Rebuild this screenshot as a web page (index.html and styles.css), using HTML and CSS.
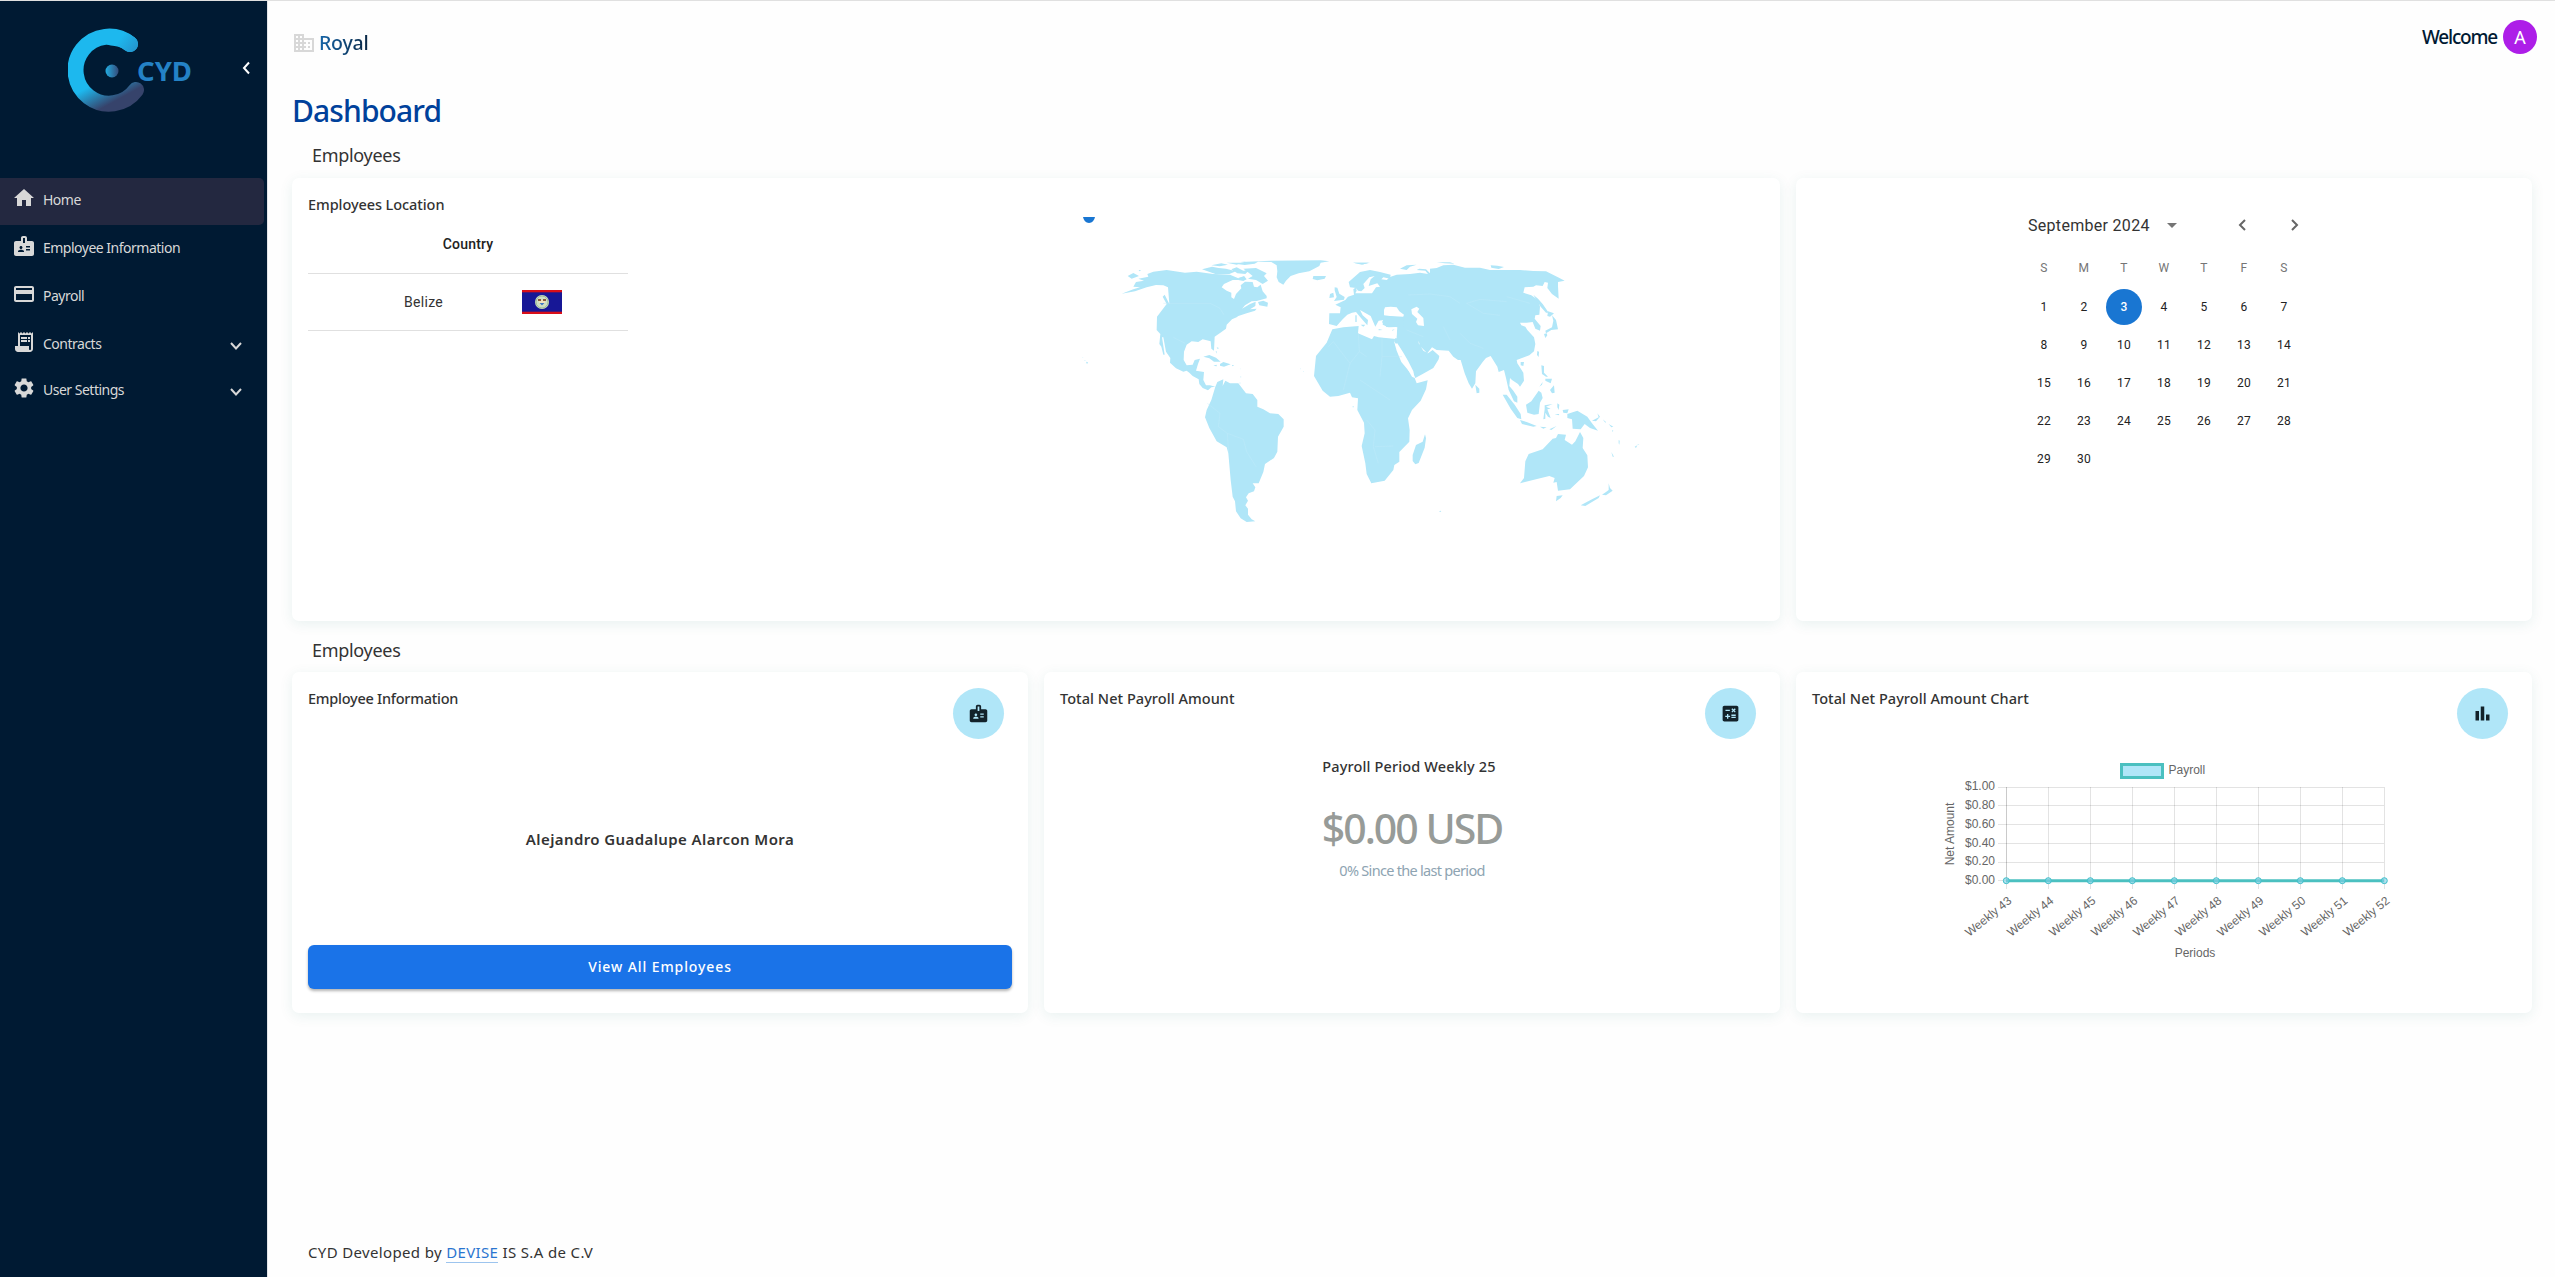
FILE: index.html
```html
<!DOCTYPE html>
<html lang="en">
<head>
<meta charset="utf-8">
<title>CYD Dashboard</title>
<link rel="stylesheet" href="styles.css">
</head>
<body>
<svg class="defs" width="0" height="0">
  <symbol id="badge" viewBox="0 0 24 24"><path fill-rule="evenodd" d="M20 7h-5V4c0-1.100-.9-2-2-2h-2c-1.100 0-2 .9-2 2v3H4c-1.100 0-2 .9-2 2v11c0 1.100.9 2 2 2h16c1.100 0 2-.9 2-2V9c0-1.100-.9-2-2-2zM9 12c.83 0 1.500.67 1.500 1.500S9.830 15 9 15s-1.500-.67-1.500-1.500S8.170 12 9 12zm3 6H6v-.75c0-1 2-1.500 3-1.500s3 .5 3 1.500V18zm1-9h-2V4h2v5zm5 7.500h-4V15h4v1.500zm0-3h-4V12h4v1.500z"/></symbol>
  <symbol id="down" viewBox="0 0 14 14"><path d="M2 4l5 5.500L12 4" fill="none" stroke="currentColor" stroke-width="2"/></symbol>
</svg>
<div class="app">
  <aside class="sidebar">
    <div class="brand">
      <svg class="logo" width="130" height="90" viewBox="0 0 130 90">
        <defs>
          <linearGradient id="ring" gradientUnits="userSpaceOnUse" x1="34" y1="28" x2="58" y2="72"><stop offset=".45" stop-color="#1db8ee"/><stop offset=".95" stop-color="#36436b"/></linearGradient>
          <linearGradient id="dot"><stop offset="0" stop-color="#22aee3"/><stop offset="1" stop-color="#354a78"/></linearGradient>
          <linearGradient id="tip" gradientUnits="userSpaceOnUse" x1="54" y1="10" x2="72" y2="24"><stop offset="0" stop-color="#1db8ee"/><stop offset="1" stop-color="#258fc8"/></linearGradient>
        </defs>
        <path d="M68 64A33.500 33.500 0 1 1 62 18" fill="none" stroke="url(#ring)" stroke-width="16" stroke-linecap="round"/>
        <path d="M43 11.500A33.500 33.500 0 0 1 62 18" fill="none" stroke="url(#tip)" stroke-width="16" stroke-linecap="round"/>
        <circle cx="44" cy="45" r="6.500" fill="url(#dot)"/>
        <text class="logo-text" x="69" y="54.500" textLength="55" lengthAdjust="spacingAndGlyphs">CYD</text>
      </svg>
      <svg class="collapse" width="12" height="14" viewBox="0 0 12 14"><path d="M8 1.500L3 7l5 5.500" fill="none" stroke="#fff" stroke-width="2"/></svg>
    </div>
    <nav class="menu">
      <a class="item active"><svg class="icon" viewBox="0 0 24 24"><path d="M10 20v-6h4v6h5v-8h3L12 3 2 12h3v8z"/></svg><span class="w-home">Home</span></a>
      <a class="item"><svg class="icon"><use href="#badge"/></svg><span>Employee Information</span></a>
      <a class="item"><svg class="icon" viewBox="0 0 24 24"><path d="M20 4H4c-1.110 0-2 .89-2 2v12c0 1.110.89 2 2 2h16c1.110 0 2-.89 2-2V6c0-1.110-.89-2-2-2zm0 14H4v-6h16v6zm0-10H4V6h16v2z"/></svg><span>Payroll</span></a>
      <a class="item short"><svg class="icon" viewBox="0 0 24 24"><path d="M19.500 3.500L18 2l-1.500 1.500L15 2l-1.500 1.500L12 2l-1.500 1.500L9 2 7.500 3.500 6 2v14H3v3c0 1.660 1.340 3 3 3h12c1.660 0 3-1.340 3-3V2l-1.500 1.500zM19 19c0 .55-.45 1-1 1s-1-.45-1-1v-3H8V5h11v14zM9 7h6v2H9zm7 0h2v2h-2zM9 10h6v2H9zm7 0h2v2h-2z"/></svg><span>Contracts</span><svg class="chev"><use href="#down"/></svg></a>
      <a class="item short"><svg class="icon" viewBox="0 0 24 24"><path d="M19.140 12.940c.04-.3.060-.61.060-.94 0-.32-.02-.64-.07-.94l2.030-1.580c.18-.14.230-.41.120-.61l-1.920-3.320c-.12-.22-.37-.29-.59-.22l-2.390.96c-.5-.38-1.030-.7-1.620-.94l-.36-2.540c-.04-.24-.24-.41-.48-.41h-3.840c-.24 0-.43.17-.47.41l-.36 2.540c-.59.24-1.130.57-1.620.94l-2.390-.96c-.22-.08-.47 0-.59.22L2.740 8.870c-.12.210-.08.470.12.610l2.030 1.580c-.05.3-.09.63-.09.94s.02.640.070.940l-2.030 1.580c-.18.140-.23.410-.12.610l1.920 3.320c.12.220.370.290.590.220l2.390-.96c.5.380 1.030.7 1.620.94l.36 2.540c.05.240.240.410.480.410h3.840c.24 0 .44-.17.470-.41l.36-2.540c.59-.24 1.130-.56 1.620-.94l2.390.96c.22.080.470 0 .59-.22l1.920-3.320c.12-.22.070-.47-.12-.61l-2.010-1.580zM12 15.600c-1.980 0-3.600-1.620-3.600-3.600s1.620-3.600 3.600-3.600 3.600 1.620 3.600 3.600-1.620 3.600-3.600 3.600z"/></svg><span>User Settings</span><svg class="chev"><use href="#down"/></svg></a>
    </nav>
  </aside>

  <main class="main">
    <header class="topbar">
      <div class="company"><svg class="icon" viewBox="0 0 24 24"><path d="M12 7V3H2v18h20V7H12zM6 19H4v-2h2v2zm0-4H4v-2h2v2zm0-4H4V9h2v2zm0-4H4V5h2v2zm4 12H8v-2h2v2zm0-4H8v-2h2v2zm0-4H8V9h2v2zm0-4H8V5h2v2zm10 12h-8v-2h2v-2h-2v-2h2v-2h-2V9h8v10zm-2-8h-2v2h2v-2zm0 4h-2v2h2v-2z"/></svg><span class="company-name">Royal</span></div>
      <div class="user"><span class="welcome">Welcome</span><span class="avatar">A</span></div>
    </header>
    <h1 class="page-title">Dashboard</h1>

    <h2 class="section">Employees</h2>
    <div class="row top">
      <section class="card location">
        <h3 class="card-title">Employees Location</h3>
        <div class="location-body">
          <div class="countries">
            <div class="thead">Country</div>
            <div class="tr"><span class="country">Belize</span>
              <svg class="flag" width="40" height="24" viewBox="0 0 40 24"><rect width="40" height="24" fill="#171796"/><rect width="40" height="2.300" fill="#d90f19"/><rect y="21.700" width="40" height="2.300" fill="#d90f19"/><circle cx="20" cy="12" r="7" fill="#cfe0c4"/><circle cx="20" cy="12" r="6" fill="none" stroke="#9dbb94"/><path d="M17 10h6v3l-3 3-3-3z" fill="#f2e3bd"/><path d="M17.500 13h5l-2.500 2.500z" fill="#3b7cc4"/><path d="M16 9h3v2h-3zM21 9h3v2h-3z" fill="#8a5a3c"/></svg>
            </div>
          </div>
          <svg class="map" width="600" height="340" viewBox="0 0 1800 1020">
            <path d="M39 51H75Q72 68 57 69 42 68 39 51Z" fill="#1976d2"/>
            <g fill="#b0e6f8">
              <path d="M155 281L190 268 210 262 190 260 198 246 222 242 205 236 235 230 232 222 250 215 290 210 345 218 380 215 430 222 480 224 505 235 522 228 530 238 520 243 505 240 488 240 462 252 455 262 470 272 484 278 484 292 492 297 498 282 514 265 512 256 525 245 548 246 552 260 562 262 572 254 578 274 590 288 590 295 560 303 545 304 525 316 516 326 540 312 557 305 556 318 540 328 560 326 555 332 530 340 505 348 500 352 486 358 470 374 468 386 450 399 434 410 432 452 424 446 422 424 398 418 385 426 365 424 350 434 342 455 341 480 350 496 368 494 374 480 390 476 384 492 378 512 402 516 400 540 408 556 420 556 436 560 424 562 414 571 398 564 388 552 386 538 368 528 358 518 350 512 340 515 318 505 300 488 301 474 288 455 280 412 276 412 284 464 280 464 274 440 268 432 271 402 260 390 261 350 290 312 278 290 284 284 298 312 294 262 280 256 258 255 230 262 195 274Z"/>
              <path d="M173 228L190 219 207 228 185 236ZM206 210l8 1-6 3zM396 208l30-8 20 4 22 2 30 8-20 8-40 1zM424 196l30-6 20 4-25 5zM470 188l50 0-20 6zM484 208l16-6 20 10 18-2-12 12-24-2zM520 206l38-2 32 16-8 8 12 14-16 10-20-12-24-4 14-8-12-10zM504 234l20-4-4 8zM512 186l90-4 150-1 26 3-26 4-4 10-30 16-32 6-24 8-14 14-8 12-14-8-6-14 2-18-2-18-16-10-40-1-10 6-30 4-30-4 34-6zM564 306l16-4 14 6-2 12-24-4zM730 228l38 0-4 8-22 5-14-4zM850 188h46l-20 6z"/>
              <path d="M400 470l18-5 20 8 14 12-20 0-14-10zM430 497l10-3 0 5zM450 492l10-6 22 7-20 7-12-3zM486 495l7 1-6 3zM440 442l7 2-4 3zM437 454l3 0 0 7zM48 485l6 2-3 6zM44 480l3 2-3 1zM38 472l2 1-2 1zM510 504l1 4-1 0zM512 528l2 3-2 2zM508 548l4 0-2 3z"/>
              <path d="M436 560L442 546 460 538 458 558 466 542 480 550 505 550 528 580 548 582 562 600 562 620 580 628 600 640 625 642 641 658 641 680 624 710 622 755 612 774 585 792 580 816 566 850 548 850 556 862 552 874 536 880 528 892 534 902 526 916 534 926 534 944 545 958 556 964 530 966 512 955 498 934 495 904 488 890 482 840 475 760 470 742 440 724 418 684 405 652 410 630 424 600Z"/>
              <path d="M787 388L820 382 866 378 864 400 892 412 906 418 912 408 926 412 978 417 972 424 980 452 994 486 1034 534 1040 550 1073 541 1068 568 1052 602 1026 630 1014 655 1019 690 1018 725 988 756 988 785 973 795 970 810 944 842 904 850 890 822 886 790 875 738 884 700 882 668 862 630 864 595 846 592 840 578 805 588 780 590 758 572 732 528 738 468 770 428Z"/>
              <path d="M1065 703l3 12-4 28-18 46-10 4-8-10 0-18 10-30 20-10zM848 619h3v3h-3zM690 505l2 2-2 1zM700 513l2 2-2 1z"/>
              <path d="M777 372L778 340 810 340 812 322 796 314 826 300 834 290 852 284 850 268 858 262 860 272 856 280 880 280 906 280 918 262 930 260 922 250 896 258 902 238 914 228 898 232 880 252 884 264 874 274 864 272 858 264 840 262 836 246 870 216 900 210 930 216 962 224 960 236 940 232 934 238 950 240 962 230 980 224 1020 222 1050 218 1074 222 1066 212 1040 210 1048 206 1068 208 1080 220 1080 206 1100 204 1120 196 1150 194 1185 203 1230 203 1260 210 1350 210 1390 213 1428 214 1464 232 1484 242 1464 246 1464 258 1466 296 1446 282 1432 264 1434 248 1424 246 1418 258 1398 256 1390 260 1364 262 1360 278 1384 286 1404 300 1410 320 1408 344 1396 346 1394 356 1412 378 1410 392 1396 386 1388 366 1370 368 1350 368 1354 376 1366 380 1372 390 1392 412 1396 432 1392 454 1378 466 1356 474 1340 480 1342 490 1360 518 1362 542 1350 560 1344 552 1326 540 1320 534 1318 558 1330 572 1342 590 1342 608 1332 604 1316 570 1308 534 1302 510 1286 516 1282 500 1262 468 1248 474 1238 486 1218 514 1216 550 1206 566 1196 550 1184 520 1172 480 1164 480 1150 470 1136 452 1100 450 1086 442 1072 460 1050 438 1046 422 1046 430 1060 452 1074 460 1088 450 1108 468 1106 478 1090 504 1058 522 1036 534 1026 514 1000 470 992 448 978 432 972 424 980 404 982 382 950 382 936 366 944 356 990 346 960 352 942 360 926 362 916 380 902 348 870 330 878 346 894 360 892 376 876 358 858 336 846 338 832 344 818 358 800 378Z"/>
            </g>
            <path fill="#fff" d="M945 322L962 320 980 322 988 334 1002 344 998 354 960 348 942 346 942 330ZM1024 328L1040 320 1048 326 1042 336 1060 354 1062 378 1044 376 1038 366 1042 356 1026 342ZM918 383L980 380 980 415 940 412 918 400ZM975 432L982 430 1000 458 1014 482 1030 514 1034 534 1026 530 1004 492Z"/>
            <g fill="#b0e6f8">
              <path d="M940 352L960 348 1000 350 1002 380 956 382 938 374ZM926 387l12 3-12 1zM966 390l8-2-6 4zM872 374l14 0-6 6zM856 346l4 0 0 20-4 0zM794 262l8 1 6 18 16 10-2 8-30 4 8-12-6-20zM780 282l10-4 2 14-14 2zM990 206l20-10 30-2-20 6-10 10zM1100 187l40 0 14 4-30-1zM1262 196l20 1 20 4-16 6-22-4zM848 188h52l-20 5z"/>
              <path d="M1390 284l14 12 14 16 18 26-8 0-16-18zM1434 334l18 6-12 10-8-2zM1446 346l12 14 6 28-20 2-16 10-2-8 20-10 4-20zM1422 402l8-2 2 6-6 8zM1402 453l5 2-1 16-5-6zM1352 486l10 0-2 12-8-2zM1414 496l8 2 0 20 12 12-6 0-12-8zM1426 536l20 0-4 14-16-8zM1440 570l12-14 2 22-8 2zM1408 560l10-14-2 8zM1216 554l12 12 0 12-8 2z"/>
              <path d="M1298 584l12 0 24 30 18 28 2 16-12-4-20-28zM1350 660l20 6 30 12-10 2-34-8zM1368 614l16-10 22-32 8 6 4 16-8 14-4 34-14 2-20-6zM1424 616l24-4-20 8 14 6-10 2 10 26-8-4-8-12 0 18-6 2 4-30zM1410 680l20 2-10 4zM1438 688l22-10-16 12zM1462 610l6 4-2 16-4-8zM1454 642l14 0-2 4zM1478 630l18-2-4 12-12-2zM1492 642l30-10 30 18 14 20 18 22-24-8-16-12-12 16-24-2-2-28-14-4zM1566 662l20-10-4-12 8 10-12 14zM1598 658l10 8-2 2zM1616 672l14 8-6 2zM1626 690l4 2-2 4zM1646 720l3 2-1 12-2-4zM1624 756l8 14-4 0zM1694 740l8-4-4 8zM1702 734l6-2-4 4zM1106 934l6-2 2 4z"/>
              <path d="M1530 696l10 18-2 30 14 22 2 36-12 26-42 40-36 4-4-26-10 2 4-14-16-6-40 10-48 12 12-16 4-50 10-22 42-14 30-32 10-2 6-12 24 2-4 16 22 14 10-10zM1460 888l18-2-6 8-14 10zM1616 850l4 14 8 8-20 14-12-2 12-8 8-6zM1590 886l-4 8-40 24-14-2 34-18z"/>
            </g>
            <path d="M280 310H420L450 325 462 345M310 412L345 430M775 440L790 425 840 490 820 570M865 400L868 455 840 490M868 455L890 470M936 415V470H996M936 470L930 530M1015 285L1080 282 1140 290 1170 310M1190 310L1230 298 1310 305M1190 310L1240 340 1290 346M1310 290L1380 310M1010 390L1060 410M1120 380L1140 420M1170 400L1200 430 1240 445M472 700L520 718 530 755 558 800M412 610L450 640 445 680 472 700 476 760M890 660L915 690 910 740 925 790M915 740L970 738M870 540L930 580 960 600" fill="none" stroke="#c3ebf9" stroke-width="1.200"/>
          </svg>
        </div>
      </section>
      <section class="card calendar">
        <div class="cal">
          <div class="cal-head"><span>September 2024</span><svg width="10" height="5" viewBox="0 0 10 5"><path d="M0 0h10L5 5z" fill="#757575"/></svg><i></i><svg width="9" height="12" viewBox="0 0 9 12"><path d="M7 1L2 6l5 5" fill="none" stroke="#666" stroke-width="2"/></svg><svg width="9" height="12" viewBox="0 0 9 12"><path d="M2 1l5 5-5 5" fill="none" stroke="#666" stroke-width="2"/></svg></div>
          <div class="cal-row days"><span>S</span><span>M</span><span>T</span><span>W</span><span>T</span><span>F</span><span>S</span></div>
          <div class="cal-row"><span>1</span><span>2</span><span class="today">3</span><span>4</span><span>5</span><span>6</span><span>7</span></div>
          <div class="cal-row"><span>8</span><span>9</span><span>10</span><span>11</span><span>12</span><span>13</span><span>14</span></div>
          <div class="cal-row"><span>15</span><span>16</span><span>17</span><span>18</span><span>19</span><span>20</span><span>21</span></div>
          <div class="cal-row"><span>22</span><span>23</span><span>24</span><span>25</span><span>26</span><span>27</span><span>28</span></div>
          <div class="cal-row"><span>29</span><span>30</span></div>
        </div>
      </section>
    </div>

    <h2 class="section second">Employees</h2>
    <div class="row bottom">
      <section class="card">
        <div class="card-head"><h3 class="card-title tight">Employee Information</h3><span class="bubble"><svg><use href="#badge"/></svg></span></div>
        <div class="employee">Alejandro Guadalupe Alarcon Mora</div>
        <button class="view-all">View All Employees</button>
      </section>
      <section class="card">
        <div class="card-head"><h3 class="card-title wide">Total Net Payroll Amount</h3><span class="bubble"><svg viewBox="0 0 24 24"><path fill-rule="evenodd" d="M19 3H5c-1.100 0-2 .9-2 2v14c0 1.100.9 2 2 2h14c1.100 0 2-.9 2-2V5c0-1.100-.9-2-2-2zm-5.970 4.060l1.060-1.060 1.410 1.410L16.910 6l1.060 1.060-1.410 1.410 1.410 1.410-1.060 1.060-1.410-1.410-1.410 1.410-1.060-1.060 1.410-1.410-1.410-1.410zM6.250 7.720h5v1.500h-5v-1.500zM11.500 16h-2v2H8v-2H6v-1.500h2v-2h1.500v2h2V16zm6.500 1.250h-5v-1.500h5v1.500zm0-2.500h-5v-1.500h5v1.500z"/></svg></span></div>
        <div class="period">Payroll Period Weekly 25</div>
        <div class="amount">$0.00 USD</div>
        <div class="since">0% Since the last period</div>
      </section>
      <section class="card">
        <div class="card-head"><h3 class="card-title wide">Total Net Payroll Amount Chart</h3><span class="bubble"><svg viewBox="0 0 24 24"><path d="M4 9h4v11H4zm12 4h4v7h-4zm-6-9h4v16h-4z"/></svg></span></div>
        <svg class="chart" width="480" height="220" viewBox="1930 750 480 220">
          <rect x="2121.500" y="764.500" width="41" height="13" fill="#b0e6f8" stroke="#4bc0c0" stroke-width="3"/>
          <text x="2168.500" y="774">Payroll</text>
          <path class="grid" d="M1998 787.500H2384M1998 805.500H2384M1998 824.500H2384M1998 843.500H2384M1998 862.500H2384M1998 880.500H2384M2006.500 787V889M2048.500 787V889M2090.500 787V889M2132.500 787V889M2174.500 787V889M2216.500 787V889M2258.500 787V889M2300.500 787V889M2342.500 787V889M2384.500 787V889"/>
          <path class="grid" d="M2006.500 787V881"/>
          <g text-anchor="end"><text x="1995" y="790">$1.00</text><text x="1995" y="809">$0.80</text><text x="1995" y="828">$0.60</text><text x="1995" y="847">$0.40</text><text x="1995" y="865">$0.20</text><text x="1995" y="884">$0.00</text></g>
          <text text-anchor="middle" transform="translate(1954 834)rotate(-90)">Net Amount</text>
          <path d="M2006 880.800H2384" stroke="#4bc0c0" stroke-width="3"/>
          <g fill="#7fd0e6" fill-opacity=".6" stroke="#3fbfca"><circle cx="2006.300" cy="880.700" r="3"/><circle cx="2048.300" cy="880.700" r="3"/><circle cx="2090.300" cy="880.700" r="3"/><circle cx="2132.300" cy="880.700" r="3"/><circle cx="2174.300" cy="880.700" r="3"/><circle cx="2216.300" cy="880.700" r="3"/><circle cx="2258.300" cy="880.700" r="3"/><circle cx="2300.300" cy="880.700" r="3"/><circle cx="2342.300" cy="880.700" r="3"/><circle cx="2384.300" cy="880.700" r="3"/></g>
          <g text-anchor="end">
            <text transform="translate(2012.500 902)rotate(-39)">Weekly 43</text><text transform="translate(2054.500 902)rotate(-39)">Weekly 44</text><text transform="translate(2096.500 902)rotate(-39)">Weekly 45</text><text transform="translate(2138.500 902)rotate(-39)">Weekly 46</text><text transform="translate(2180.500 902)rotate(-39)">Weekly 47</text><text transform="translate(2222.500 902)rotate(-39)">Weekly 48</text><text transform="translate(2264.500 902)rotate(-39)">Weekly 49</text><text transform="translate(2306.500 902)rotate(-39)">Weekly 50</text><text transform="translate(2348.500 902)rotate(-39)">Weekly 51</text><text transform="translate(2390.500 902)rotate(-39)">Weekly 52</text>
          </g>
          <text x="2195" y="957" text-anchor="middle">Periods</text>
        </svg>
      </section>
    </div>
    <footer class="footer">CYD Developed by <a>DEVISE</a> IS S.A de C.V</footer>
  </main>
</div>
</body>
</html>
```
FILE: styles.css
```css
* { box-sizing: border-box; margin: 0; padding: 0; }
body { font-family: "Noto Sans", "Open Sans", sans-serif; color: #333; background: #fefefe; }
.defs { display: block; }
svg { display: block; flex: none; }
.app { display: flex; height: 1277px; border-top: 1px solid #e0e0e0; overflow: hidden; }

.sidebar { width: 268px; flex: none; background: #001a33; border-right: 1px solid #e3e5e8; }
.brand { height: 177px; display: flex; align-items: flex-start; padding: 25px 14px 0 68px; justify-content: space-between; }
.logo-text { font: 700 27px "Noto Sans", sans-serif; fill: #2482c6; }
.collapse { margin-top: 35px; }
.item { display: flex; height: 48px; padding: 8px 24px 0 12px; color: #d8d8d8; font-size: 14px; letter-spacing: -0.5px; }
.item.short { height: 46px; }
.item.active { height: 47px; margin: 0 3px 1px 0; background: #232840; border-radius: 0 5px 5px 0; }
.icon { width: 24px; height: 24px; fill: #d8d8d8; }
.item span { flex: 1; margin-left: 7px; line-height: 20px; padding-top: 4px; white-space: nowrap; }
.chev { width: 14px; height: 14px; margin-top: 9px; }

.main { flex: 1; min-width: 0; padding: 0 23px 0 24px; display: flex; flex-direction: column; }
.topbar { display: flex; justify-content: space-between; height: 85px; }
.company { display: flex; padding-top: 30px; gap: 3px; height: 56px; }
.company-name { font-size: 19.500px; font-weight: 500; line-height: 24px; letter-spacing: -0.2px; background: linear-gradient(90deg, #1565a8, #0a2744); background-clip: text; color: transparent; height: 28px; }
.user { display: flex; align-items: center; gap: 6px; height: 34px; margin: 19px -5px 0 0; }
.welcome { font-size: 19px; font-weight: 500; letter-spacing: -1.2px; color: #001a33; }
.avatar { width: 34px; height: 34px; border-radius: 50%; background: #ad1ee8; color: #fff; font: 18px/34px "Noto Sans", sans-serif; text-align: center; }
.page-title { font-size: 30px; font-weight: 500; line-height: 50px; letter-spacing: -0.9px; color: #00419b; }
.section { font-size: 18px; font-weight: 400; line-height: 24px; margin: 7px 0 11px 20px; letter-spacing: -0.3px; }
.section.second { margin-top: 17px; margin-bottom: 10px; }

.row { display: flex; gap: 16px; }
.row.top { height: 443px; }
.row.bottom { height: 341px; }
.card { flex: 1 1 0; min-width: 0; background: #fff; border-radius: 7px; box-shadow: 0 3px 14px rgba(0, 110, 100, .09); padding: 16px; display: flex; flex-direction: column; }
.card.location { flex: none; width: 1488px; }
.card-title { font-size: 14.500px; font-weight: 500; letter-spacing: -0.08px; line-height: 21px; }
.card-title.tight { letter-spacing: -0.25px; }
.card-title.wide { letter-spacing: .05px; }
.location-body { display: flex; }
.countries { width: 320px; font-family: Roboto, sans-serif; font-size: 14px; margin-top: 10px; }
.thead { height: 49px; border-bottom: 1px solid #e0e0e0; text-align: center; font-weight: 500; line-height: 14px; padding-top: 12px; letter-spacing: .2px; color: #222; }
.tr { height: 57px; border-bottom: 1px solid #e0e0e0; display: flex; align-items: center; padding-left: 96px; }
.country { width: 118px; font-size: 14px; letter-spacing: .3px; }
.map { margin: -15px 0 0 442px; }

.card.calendar { padding: 35px 0 0 224px; }
.cal { width: 288px; font-family: Roboto, sans-serif; color: #222; }
.cal-head { display: flex; align-items: center; height: 24px; font-size: 16px; color: #333; margin-left: 8px; letter-spacing: .3px; }
.cal-head span { width: 139px; }
.cal-head i { width: 61px; }
.cal-head svg:last-child { margin-left: 43px; }
.cal-row { display: grid; grid-template-columns: repeat(7, 40px); padding-left: 4px; height: 38px; font-size: 12px; line-height: 36px; text-align: center; letter-spacing: .3px; align-items: center; }
.cal-row.days { height: 41px; margin-top: 10px; color: #757575; }
.today { width: 36px; height: 36px; margin: 0 2px; background: #1976d2; color: #fff; font-weight: 500; border-radius: 50%; }

.card-head { display: flex; justify-content: space-between; height: 51px; padding-right: 8px; }
.bubble { width: 51px; height: 51px; border-radius: 50%; background: #b0e6f8; display: flex; align-items: center; justify-content: center; }
.bubble svg { width: 21px; height: 21px; fill: #12222a; }
.employee { flex: 1; display: flex; align-items: center; justify-content: center; font-size: 15px; font-weight: 600; letter-spacing: .4px; padding-bottom: 6px; }
.view-all { height: 44px; margin-bottom: 8px; border: 0; border-radius: 6px; background: #1a73e8; color: #fff; font: 500 14px "Noto Sans", sans-serif; letter-spacing: .9px; padding-bottom: 2px; box-shadow: 0 2px 3px rgba(0, 0, 0, .3); }
.period { text-align: center; font-size: 14.500px; font-weight: 500; line-height: 22px; margin-top: 16px; letter-spacing: .14px; padding-right: 6px; }
.amount { text-align: center; font-size: 41px; font-weight: 500; letter-spacing: -2px; line-height: 50px; color: #979b98; margin-top: 26px; }
.since { text-align: center; font-size: 14.500px; letter-spacing: -0.7px; line-height: 20px; color: #8ea4b2; margin-top: 7px; }
.chart { margin: 11px 0 0 118px; font: 12px "Liberation Sans", Arial, sans-serif; }
.chart text { fill: #666; }
.grid { stroke: rgba(0, 0, 0, .11); fill: none; }
.footer { margin: auto 0 14px 16px; font-size: 15px; line-height: 22px; letter-spacing: .35px; }
.footer a { color: #2a75d0; border-bottom: 1px solid #9cc4ee; }
```
